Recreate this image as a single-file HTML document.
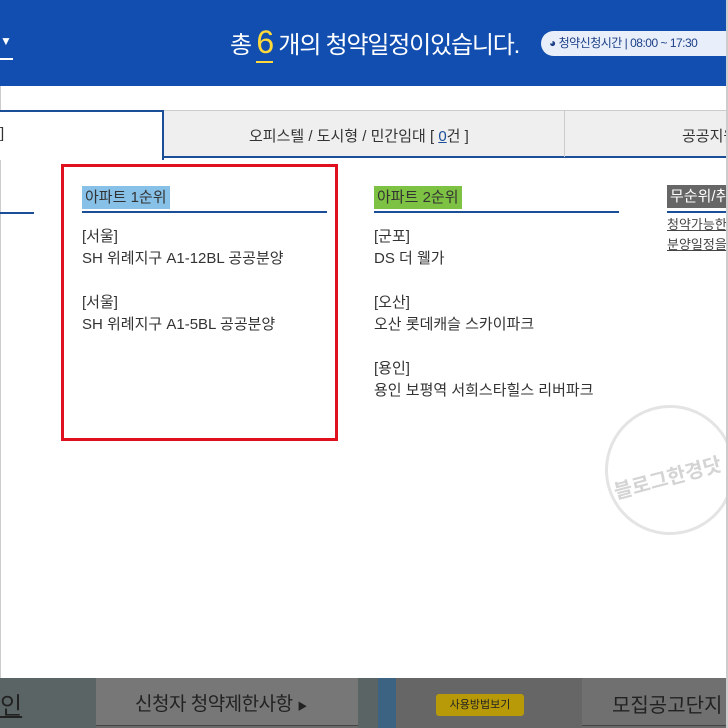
<!DOCTYPE html>
<html><head><meta charset="utf-8"><style>
*{margin:0;padding:0;box-sizing:border-box}
body{width:728px;height:728px;overflow:hidden;background:#fff;font-family:"Liberation Sans","Noto Sans CJK KR",sans-serif;position:relative;color:#333}
.a{position:absolute;white-space:nowrap}
.hd{left:0;top:0;width:728px;height:86px;background:#114eb0}
.t{font-size:15px;color:#333}
.it{font-size:15px;color:#333;line-height:22px}
</style></head><body>
<div class="a" style="left:0;top:0;width:1px;height:728px;background:#ccc"></div>
<div class="a" style="right:0;top:0;width:2px;height:728px;background:#ccc;z-index:5"></div>
<div class="a hd"></div>
<div class="a" style="left:0;top:34px;color:#fff;font-size:12px">▼</div>
<div class="a" style="left:0;top:58px;width:13px;height:2px;background:#fff"></div>
<div class="a" style="left:230px;top:22px;color:#fff;font-size:24px;line-height:40px;letter-spacing:-1.2px">총 <span style="color:#ffd83a;font-size:32px">6</span> 개의 청약일정이있습니다.</div>
<div class="a" style="left:256px;top:61px;width:17px;height:2px;background:#ffd83a"></div>
<div class="a" style="left:541px;top:31px;width:200px;height:25px;border-radius:13px;background:#e8eefa;color:#1c3f86;font-size:12px;line-height:25px;padding-left:8px;letter-spacing:-0.5px">◕ 청약신청시간 | 08:00 ~ 17:30</div>
<div class="a" style="left:0;top:110px;width:728px;height:48px;background:#efefef;border-top:1px solid #ccc;border-bottom:2px solid #1a4e96"></div>
<div class="a" style="left:0;top:110px;width:164px;height:50px;background:#fff;border-top:2px solid #1a4e96;border-right:2px solid #1a4e96"></div>
<div class="a t" style="left:0;top:125px">]</div>
<div class="a" style="left:564px;top:111px;width:1px;height:46px;background:#ccc"></div>
<div class="a t" style="left:249px;top:125px">오피스텔 / 도시형 / 민간임대 [ <span style="color:#1a4e96;text-decoration:underline">0</span>건 ]</div>
<div class="a t" style="left:682px;top:125px">공공지원</div>
<div class="a" style="left:0;top:212px;width:34px;height:2px;background:#1a4e96"></div>
<div class="a" style="left:61px;top:164px;width:277px;height:277px;border:3px solid #e0101e"></div>
<div class="a" style="left:82px;top:186px;background:#87c1e8;font-size:15px;padding:0 3px;line-height:23px">아파트 1순위</div>
<div class="a" style="left:82px;top:211px;width:245px;height:2px;background:#1a4e96"></div>
<div class="a it" style="left:82px;top:226px">[서울]<br>SH 위례지구 A1-12BL 공공분양<br><br>[서울]<br>SH 위례지구 A1-5BL 공공분양</div>
<div class="a" style="left:374px;top:186px;background:#7dc242;font-size:15px;padding:0 3px;line-height:23px">아파트 2순위</div>
<div class="a" style="left:374px;top:211px;width:245px;height:2px;background:#1a4e96"></div>
<div class="a it" style="left:374px;top:226px">[군포]<br>DS 더 웰가<br><br>[오산]<br>오산 롯데캐슬 스카이파크<br><br>[용인]<br>용인 보평역 서희스타힐스 리버파크</div>
<div class="a" style="left:667px;top:185px;background:#666;color:#fff;font-size:15px;padding:0 3px;line-height:23px">무순위/취소</div>
<div class="a" style="left:667px;top:211px;width:70px;height:2px;background:#1a4e96"></div>
<div class="a" style="left:667px;top:215px;font-size:13px;line-height:20px;color:#444;text-decoration:underline">청약가능한<br>분양일정을</div>
<div class="a" style="left:605px;top:405px;width:130px;height:130px;border-radius:50%;border:3px solid #e4e4e4;transform:rotate(-15deg)"></div>
<div class="a" style="left:612px;top:462px;color:#d4d4d4;font-size:20px;font-weight:bold;transform:rotate(-15deg)">블로그한경닷</div>
<div class="a" style="left:0;top:678px;width:728px;height:50px;background:#6a6a6a"></div>
<div class="a" style="left:0;top:678px;width:96px;height:50px;background:#5b6464"></div>
<div class="a" style="left:96px;top:678px;width:262px;height:48px;background:#777;border-bottom:1px solid #444"></div>
<div class="a" style="left:358px;top:678px;width:20px;height:50px;background:#5b6464"></div>
<div class="a" style="left:378px;top:678px;width:18px;height:50px;background:#3c6382"></div>
<div class="a" style="left:396px;top:678px;width:186px;height:50px;background:#666"></div>
<div class="a" style="left:582px;top:678px;width:146px;height:48px;background:#707070;border-bottom:1px solid #444"></div>
<div class="a" style="left:0;top:686px;font-size:24px;color:#222;text-decoration:underline">인</div>
<div class="a" style="left:135px;top:689px;font-size:19px;color:#222;letter-spacing:-0.5px">신청자 청약제한사항 <span style="font-size:10px">▶</span></div>
<div class="a" style="left:436px;top:694px;width:88px;height:22px;background:#b89a08;border-radius:3px;font-size:11px;color:#222;text-align:center;line-height:22px">사용방법보기</div>
<div class="a" style="left:612px;top:689px;font-size:20px;color:#222">모집공고단지</div>
</body></html>
